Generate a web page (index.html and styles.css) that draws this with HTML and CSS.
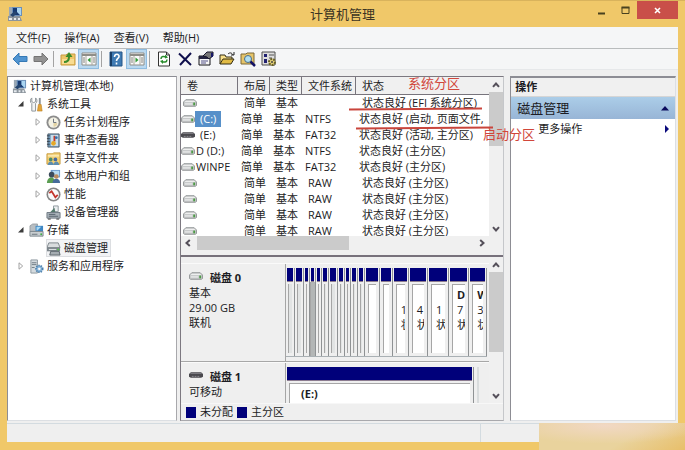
FILE: index.html
```html
<!DOCTYPE html>
<html lang="zh-CN">
<head>
<meta charset="utf-8">
<title>计算机管理</title>
<link rel="stylesheet" href="styles.css">
</head>
<body>
<svg class="sprites" aria-hidden="true">
  <symbol id="i-pc" viewBox="0 0 16 16"><path d="M2 1h5v9H2z" fill="#9aa8b4"/><path d="M5 1h10v9H5z" fill="#6b8fb8"/><path d="M6 2h8v7H6z" fill="#a9d5f2"/><path d="M6 2h4v4l3 3H6z" fill="#173b73"/><path d="M1 10h12l2 5H1z" fill="#8c959d"/><path d="M2 12h3v2H2zM7 12h2v2H7zM11 12h2v2h-2z" fill="#e5eaee"/><path d="M3 9l5-4 2 2-4 4z" fill="#26466f"/></symbol>
  <symbol id="i-tools" viewBox="0 0 16 16"><path d="M3 1v4l2 1 2-1V1c2 1 2 5 0 6v8H3V7C1 6 1 2 3 1z" fill="#f3f5f6" stroke="#8b9297"/><path d="M11.500 1v7" stroke="#8b9297" stroke-width="2"/><path d="M10 8h3l1 7H9z" fill="#e3a53a" stroke="#b97b1c" stroke-width=".6"/></symbol>
  <symbol id="i-clock" viewBox="0 0 16 16"><circle cx="8" cy="8" r="7.500" fill="#8c8c8c"/><circle cx="8" cy="8" r="5.500" fill="#f3f1e4"/><path d="M8 4v4h3" stroke="#68707c" fill="none"/><path d="M8 8.500h4a4 4 0 0 1-4 4z" fill="#e3d3a3"/></symbol>
  <symbol id="i-event" viewBox="0 0 16 16"><path d="M2 1h12v14H2z" fill="#6c96b7" stroke="#51606f"/><path d="M1 3h3M1 6h3M1 9h3M1 12h3" stroke="#36424d"/><path d="M5 2h8v12H5z" fill="#c9dfec"/><path d="M9 3v6" stroke="#c23a2d" stroke-width="2"/><circle cx="8" cy="11" r="2.500" fill="#e5a928"/><circle cx="11" cy="5" r="1.500" fill="#376dab"/></symbol>
  <symbol id="i-share" viewBox="0 0 16 16"><path d="M1 3h6l1-1h7v12H1z" fill="#f1ce72" stroke="#c79a3d"/><path d="M2 5h12" stroke="#fbe7ad" stroke-width="2"/><circle cx="5" cy="9" r="2" fill="#4c8a6a"/><circle cx="10" cy="9" r="2" fill="#496a9f"/><path d="M2 15c0-5 6-5 6 0zM8 15c0-5 6-5 6 0z" fill="#5d8db0"/></symbol>
  <symbol id="i-users" viewBox="0 0 16 16"><path d="M5 1h10v8H5z" fill="#6f9ccc"/><path d="M7 2h7v6H7z" fill="#b6daf1"/><circle cx="6" cy="6" r="3" fill="#3c4c5c"/><circle cx="11" cy="8" r="2.500" fill="#bc8c5e"/><path d="M1 15c0-8 9-8 9 0z" fill="#5b9d52"/><path d="M7 15c0-6 8-6 8 0z" fill="#466b9a"/></symbol>
  <symbol id="i-perf" viewBox="0 0 16 16"><circle cx="8" cy="8" r="7.500" fill="#858585"/><circle cx="8" cy="8" r="5.800" fill="#fafafa"/><path d="M3.500 6.500L6 4.500l4 6.500 2.500-2.500" stroke="#c3342b" fill="none" stroke-width="1.800"/></symbol>
  <symbol id="i-device" viewBox="0 0 16 16"><path d="M8 1h5v6H8z" fill="#eceff1" stroke="#8d979d"/><path d="M6 6l3-3 1 5H4z" fill="#53796b"/><path d="M1 8h14v6H1z" fill="#a9b2b9" stroke="#6f7a83"/><path d="M3 10h7M3 12h10" stroke="#54616b"/><path d="M2 15h3M11 15h3" stroke="#333"/></symbol>
  <symbol id="i-storage" viewBox="0 0 16 16"><path d="M1 3l3-2h5v8H1z" fill="#b8bec2" stroke="#808a90" stroke-width=".7"/><path d="M7 3h8v6H7z" fill="#3f87c4"/><path d="M8 4h5l-4 4H8z" fill="#a6d8f4"/><path d="M1 9h14v5H1z" fill="#c9ced1" stroke="#7a858c"/><path d="M3 12h6" stroke="#66727a"/><circle cx="13" cy="12" r="1" fill="#3fae43"/></symbol>
  <symbol id="i-disk" viewBox="0 0 16 16"><path d="M3 2h10l2 5H1z" fill="#d9dcde" stroke="#7c8489"/><path d="M1 7h14v4H1z" fill="#7d868c"/><path d="M3 9h8" stroke="#e6eaec"/><path d="M5 11h9l1 4H4z" fill="#a6adb2" stroke="#596269"/><circle cx="13" cy="9" r="1" fill="#59c64d"/></symbol>
  <symbol id="i-services" viewBox="0 0 16 16"><path d="M2 1h7v14H2z" fill="#d5dbdf" stroke="#8c979e"/><path d="M3 4h5M3 6h5M3 9h3" stroke="#6a7780"/><circle cx="11" cy="10.500" r="3.500" fill="#8cb9de" stroke="#4f81ac" stroke-dasharray="1.500 1" stroke-width="2"/><circle cx="11" cy="10.500" r="1.300" fill="#fff"/></symbol>
  <symbol id="i-vol" viewBox="0 0 15 8"><path d="M3 .5h9l2.500 2.500v3.500l-1 1h-12l-1-1V3z" fill="#c8cacb" stroke="#8f9293"/><path d="M3 1.500h9L13.500 3H1.500z" fill="#eeefef"/><path d="M2 5h8" stroke="#f6f6f6"/><path d="M11 3.500h2v3h-2z" fill="#4c9b45"/></symbol>
  <symbol id="i-usb" viewBox="0 0 15 8"><path d="M2 1h11l2 2v3l-2 1H2L0 6V3z" fill="#4a494e"/><path d="M2 2h11l1 1H1z" fill="#8b8a90"/><path d="M3 5.500h2M6 5.500h2M9 5.500h2" stroke="#8f8e94"/></symbol>
  <symbol id="i-open" viewBox="0 0 8 8"><path d="M6.500 1v5.500H1z" fill="#3c3c3c"/></symbol>
  <symbol id="i-closed" viewBox="0 0 8 8"><path d="M2 .8v6.400L5.700 4z" fill="#fff" stroke="#a2a2a2"/></symbol>
  <symbol id="i-chev" viewBox="0 0 10 10"><path d="M2 6.800L5 3.500l3 3.300" fill="none" stroke="#55505a" stroke-width="2"/></symbol>
  <symbol id="i-back" viewBox="0 0 16 16"><path d="M1 8l6-6v3.500h8v5H7V14z" fill="#4f94d1" stroke="#3579b5"/></symbol>
  <symbol id="i-fwd" viewBox="0 0 16 16"><path d="M15 8L9 2v3.500H1v5h8V14z" fill="#929292" stroke="#747474"/></symbol>
  <symbol id="i-up" viewBox="0 0 16 16"><path d="M1 4h5l1-1h8v11H1z" fill="#eec568" stroke="#c79b40"/><path d="M2 8h12v5H2z" fill="#f8dc92"/><path d="M4 11c4 0 5-3 5-5" stroke="#3b8c2b" stroke-width="2" fill="none"/><path d="M5.500 6L9 1l3.500 5z" fill="#3b8c2b"/></symbol>
  <symbol id="i-panel" viewBox="0 0 16 16"><path d="M1 2h14v12H1z" fill="#fafafa" stroke="#8f8e88"/><path d="M1 4h14" stroke="#8f8e88" stroke-width="2"/><path d="M5 5v9M11 5v9" stroke="#aaa79e"/><path d="M2 7h2M2 9h2M2 11h2M12 7h2M12 9h2M12 11h2" stroke="#85847f"/></symbol>
  <symbol id="i-help" viewBox="0 0 16 16"><path d="M2 1h12v14H2z" fill="#3f7bb4" stroke="#265687"/><path d="M3 1v14" stroke="#183d66" stroke-width="2"/><path d="M6.500 6c0-4 5-3 4.500-.5C11 7.500 8.500 7.500 8.500 10M8.500 11.500v2" stroke="#fff" stroke-width="1.600" fill="none"/></symbol>
  <symbol id="i-refresh" viewBox="0 0 16 16"><path d="M2.500 1h8l3 3v11h-11z" fill="#fff" stroke="#333"/><path d="M10.500 1v3h3" fill="none" stroke="#333"/><path d="M5 8c0-3 3-3 5-2M11 8.500c0 3-3 3-5 2" fill="none" stroke="#278c2c" stroke-width="1.500"/><path d="M9 3.500l3 3-3 1zM7 13l-3-3 3-1z" fill="#278c2c"/></symbol>
  <symbol id="i-x" viewBox="0 0 16 16"><path d="M2 2.500l12 11.500M14 2L3 14" stroke="#10104e" stroke-width="2" fill="none"/></symbol>
  <symbol id="i-prop" viewBox="0 0 16 16"><path d="M1 5h11v9H1z" fill="#f6f6f6" stroke="#15151b"/><path d="M1 5h11v3H1z" fill="#242442"/><path d="M3 10h7M3 12h5" stroke="#54548a"/><path d="M5 5l4-4h6v4l-4 3-2-2z" fill="#777" stroke="#16162d"/><path d="M13 2h2v4h-2z" fill="#181868"/></symbol>
  <symbol id="i-folder" viewBox="0 0 16 16"><path d="M1 13V4h5l1 2h6v2" fill="#f9e08a" stroke="#332d16"/><path d="M1 13l3-5h11l-3 5z" fill="#e1bb45" stroke="#332d16"/><path d="M9 3c2-2 4-1 5 1M12 4h3V1" fill="none" stroke="#222"/></symbol>
  <symbol id="i-search" viewBox="0 0 16 16"><path d="M1 3h5l1-1h7v11H1z" fill="#e6c469" stroke="#7b6839"/><circle cx="8" cy="8" r="3.500" fill="#b1dff1" stroke="#496d89"/><path d="M10.500 10.500L15 15" stroke="#131366" stroke-width="2.500"/></symbol>
  <symbol id="i-set" viewBox="0 0 16 16"><path d="M1 1h13v13H1z" fill="#dedede" stroke="#4f4f4f"/><path d="M3 3h3v3H3zM3 8h3v4H3z" fill="#202070"/><path d="M8 4h5M8 7h3" stroke="#555"/><circle cx="11" cy="11" r="3" fill="#e5d27a" stroke="#696025" stroke-width="2" stroke-dasharray="2 1"/><circle cx="11" cy="11" r="1" fill="#444"/></symbol>
</svg>

<div class="window">
  <header class="titlebar">
    <svg class="app-icon"><use href="#i-pc"/></svg>
    <h1>计算机管理</h1>
    <div class="win-buttons">
      <button class="win-btn" aria-label="最小化"><svg viewBox="0 0 9 9"><path d="M1 7.500h7" stroke="#49411f" stroke-width="2"/></svg></button>
      <button class="win-btn" aria-label="最大化"><svg viewBox="0 0 9 9"><path d="M1 1.500h7v6H1z" fill="none" stroke="#49411f"/><path d="M.5 1.500h8" stroke="#49411f" stroke-width="2"/></svg></button>
      <button class="win-btn close" aria-label="关闭"><svg viewBox="0 0 9 9"><path d="M2 2l5 5M7 2L2 7" stroke="#fff" stroke-width="1.600"/></svg></button>
    </div>
  </header>

  <div class="client">
    <nav class="menubar">
      <button>文件(F)</button><button>操作(A)</button><button>查看(V)</button><button>帮助(H)</button>
    </nav>
    <div class="toolbar">
      <button aria-label="后退"><svg><use href="#i-back"/></svg></button>
      <button aria-label="前进"><svg><use href="#i-fwd"/></svg></button>
      <span class="sep"></span>
      <button aria-label="上一级"><svg><use href="#i-up"/></svg></button>
      <button class="on" aria-label="显示控制台树"><svg viewBox="0 0 16 16"><use href="#i-panel"/><path d="M9.500 6.500v5L6.500 9z" fill="#2f9a35"/></svg></button>
      <span class="sep"></span>
      <button aria-label="帮助"><svg><use href="#i-help"/></svg></button>
      <button class="on" aria-label="显示操作窗格"><svg viewBox="0 0 16 16"><use href="#i-panel"/><path d="M6.500 6.500v5l3-2.500z" fill="#2f9a35"/></svg></button>
      <span class="sep"></span>
      <button aria-label="刷新"><svg><use href="#i-refresh"/></svg></button>
      <button aria-label="删除"><svg><use href="#i-x"/></svg></button>
      <button aria-label="属性"><svg><use href="#i-prop"/></svg></button>
      <button aria-label="打开"><svg><use href="#i-folder"/></svg></button>
      <button aria-label="搜索"><svg><use href="#i-search"/></svg></button>
      <button aria-label="设置"><svg><use href="#i-set"/></svg></button>
    </div>

    <main class="panes">
      <nav class="tree">
        <div class="node"><span class="label"><svg class="ico"><use href="#i-pc"/></svg>计算机管理(本地)</span></div>
        <ul>
          <li><div class="node"><svg class="twisty"><use href="#i-open"/></svg><span class="label"><svg class="ico"><use href="#i-tools"/></svg>系统工具</span></div>
            <ul>
              <li class="node"><svg class="twisty"><use href="#i-closed"/></svg><span class="label"><svg class="ico"><use href="#i-clock"/></svg>任务计划程序</span></li>
              <li class="node"><svg class="twisty"><use href="#i-closed"/></svg><span class="label"><svg class="ico"><use href="#i-event"/></svg>事件查看器</span></li>
              <li class="node"><svg class="twisty"><use href="#i-closed"/></svg><span class="label"><svg class="ico"><use href="#i-share"/></svg>共享文件夹</span></li>
              <li class="node"><svg class="twisty"><use href="#i-closed"/></svg><span class="label"><svg class="ico"><use href="#i-users"/></svg>本地用户和组</span></li>
              <li class="node"><svg class="twisty"><use href="#i-closed"/></svg><span class="label"><svg class="ico"><use href="#i-perf"/></svg>性能</span></li>
              <li class="node"><svg class="twisty"></svg><span class="label"><svg class="ico"><use href="#i-device"/></svg>设备管理器</span></li>
            </ul>
          </li>
          <li><div class="node"><svg class="twisty"><use href="#i-open"/></svg><span class="label"><svg class="ico"><use href="#i-storage"/></svg>存储</span></div>
            <ul>
              <li class="node"><svg class="twisty"></svg><span class="label current"><svg class="ico"><use href="#i-disk"/></svg>磁盘管理</span></li>
            </ul>
          </li>
          <li class="node"><svg class="twisty"><use href="#i-closed"/></svg><span class="label"><svg class="ico"><use href="#i-services"/></svg>服务和应用程序</span></li>
        </ul>
      </nav>

      <section class="center">
        <div class="volumes">
          <div class="list">
            <table>
              <colgroup><col class="c-vol"><col class="c-s"><col class="c-s"><col class="c-fs"><col></colgroup>
              <thead><tr><th>卷</th><th>布局</th><th>类型</th><th>文件系统</th><th>状态</th></tr></thead>
              <tbody>
                <tr class="unnamed"><td><svg class="vol"><use href="#i-vol"/></svg></td><td>简单</td><td>基本</td><td></td><td>状态良好 (EFI 系统分区)</td></tr>
                <tr><td><svg class="vol"><use href="#i-vol"/></svg><span class="letter picked">(C:)</span></td><td>简单</td><td>基本</td><td>NTFS</td><td>状态良好 (启动, 页面文件,</td></tr>
                <tr><td><svg class="vol"><use href="#i-usb"/></svg><span class="letter">(E:)</span></td><td>简单</td><td>基本</td><td>FAT32</td><td>状态良好 (活动, 主分区)</td></tr>
                <tr><td><svg class="vol"><use href="#i-vol"/></svg><span class="name">D (D:)</span></td><td>简单</td><td>基本</td><td>NTFS</td><td>状态良好 (主分区)</td></tr>
                <tr><td><svg class="vol"><use href="#i-vol"/></svg><span class="name">WINPE</span></td><td>简单</td><td>基本</td><td>FAT32</td><td>状态良好 (主分区)</td></tr>
                <tr class="unnamed"><td><svg class="vol"><use href="#i-vol"/></svg></td><td>简单</td><td>基本</td><td>RAW</td><td>状态良好 (主分区)</td></tr>
                <tr class="unnamed"><td><svg class="vol"><use href="#i-vol"/></svg></td><td>简单</td><td>基本</td><td>RAW</td><td>状态良好 (主分区)</td></tr>
                <tr class="unnamed"><td><svg class="vol"><use href="#i-vol"/></svg></td><td>简单</td><td>基本</td><td>RAW</td><td>状态良好 (主分区)</td></tr>
                <tr class="unnamed"><td><svg class="vol"><use href="#i-vol"/></svg></td><td>简单</td><td>基本</td><td>RAW</td><td>状态良好 (主分区)</td></tr>
              </tbody>
            </table>
          </div>
          <div class="vscroll"><svg><use href="#i-chev"/></svg><div class="track"><div class="thumb"></div></div><svg class="down"><use href="#i-chev"/></svg></div>
          <div class="hscroll"><svg class="left"><use href="#i-chev"/></svg><div class="track"><div class="thumb"></div></div><svg class="right"><use href="#i-chev"/></svg></div>
          <span class="mark line-one"></span><span class="mark line-two"></span>
          <span class="note note-one">系统分区</span><span class="note note-two">启动分区</span>
        </div>

        <div class="disks">
          <div class="disk-view">
            <div class="disk-rows">
              <div class="disk">
                <div class="disk-info"><h2><svg class="vol"><use href="#i-vol"/></svg>磁盘 0</h2><p>基本</p><p>29.00 GB</p><p>联机</p></div>
                <div class="map">
                  <div class="part thin"><i></i><div></div></div>
                  <div class="part thin"><i></i><div></div></div>
                  <div class="part thin"><i></i><div></div></div>
                  <div class="part thin dim"><i></i><div></div></div>
                  <div class="part thin"><i></i><div></div></div>
                  <div class="part thin"><i></i><div></div></div>
                  <div class="part thin"><i></i><div></div></div>
                  <div class="part thin"><i></i><div></div></div>
                  <div class="part thin"><i></i><div></div></div>
                  <div class="part thin"><i></i><div></div></div>
                  <div class="part thin"><i></i><div></div></div>
                  <div class="part"><i></i><div></div></div>
                  <div class="part"><i></i><div></div></div>
                  <div class="part"><i></i><div><b></b><span>1</span><span>状</span></div></div>
                  <div class="part"><i></i><div><b></b><span>4</span><span>状</span></div></div>
                  <div class="part"><i></i><div><b></b><span>1</span><span>状</span></div></div>
                  <div class="part"><i></i><div><b>D</b><span>7</span><span>状</span></div></div>
                  <div class="part"><i></i><div><b>W</b><span>3</span><span>状</span></div></div>
                </div>
              </div>
              <div class="disk second">
                <div class="disk-info"><h2><svg class="vol"><use href="#i-usb"/></svg>磁盘 1</h2><p>可移动</p><p>14.60 GB</p></div>
                <div class="map single"><div class="part wide"><i></i><div><b>(E:)</b></div></div></div>
              </div>
            </div>
            <div class="vscroll"><svg><use href="#i-chev"/></svg><div class="track"><div class="thumb low"></div></div><svg class="down"><use href="#i-chev"/></svg></div>
          </div>
          <div class="legend"><i></i>未分配<i></i>主分区</div>
        </div>
      </section>

      <aside class="actions">
        <h2>操作</h2>
        <button class="group">磁盘管理<svg viewBox="0 0 8 8"><path d="M0 6.500h8L4 2z" fill="#0a0a5c"/></svg></button>
        <button class="more">更多操作<svg viewBox="0 0 8 8"><path d="M3 0v8l4-4z" fill="#0a0a7c"/></svg></button>
      </aside>
    </main>
    <footer class="status"><span></span></footer>
  </div>
  <div class="haze"></div>
</div>
</body>
</html>
```
FILE: styles.css
```css
* { box-sizing: border-box; }

body {
  margin: 0;
  font: 11px/16px "Open Sans", "Noto Sans CJK SC", sans-serif;
  color: #1c1c24;
}

h1, h2, p, ul { margin: 0; padding: 0; font-size: 11px; font-weight: normal; }
ul, li { list-style: none; }
svg { display: block; flex: none; }
button { border: 0; padding: 0; background: none; font: inherit; color: inherit; }
.sprites { position: absolute; width: 0; height: 0; }

.window {
  position: relative;
  display: flex;
  flex-direction: column;
  height: 100vh;
  padding: 0 7px 8px;
  background: #f0c869;
  border-top: 1px solid #d9b35c;
  overflow: hidden;
}

/* Title bar */
.titlebar {
  flex: none;
  display: grid;
  grid-template-columns: 1fr auto 1fr;
  height: 26px;
}
.app-icon { width: 16px; height: 16px; margin: 5px 0 0; }
.titlebar h1 { font-size: 13px; line-height: 26px; color: #3c3423; }
.win-buttons { display: flex; justify-content: flex-end; align-items: flex-start; }
.win-btn { display: grid; place-items: center; width: 24px; height: 18px; }
.win-btn svg { width: 9px; height: 9px; }
.win-btn.close { width: 41px; background: #c94f49; }

.client {
  flex: 1;
  min-height: 0;
  display: flex;
  flex-direction: column;
  background: #efefef;
}

.menubar {
  flex: none;
  display: flex;
  gap: 14px;
  height: 22px;
  padding: 0 9px;
  background: #f5f6f7;
  border-bottom: 1px solid #b9bcbd;
}

.toolbar {
  flex: none;
  display: flex;
  align-items: center;
  height: 21px;
  padding-left: 2px;
  background: #f5f6f7;
  border-bottom: 1px solid #e6e8ea;
}
.toolbar button { display: grid; place-items: center; width: 21px; height: 20px; }
.toolbar button svg { width: 16px; height: 16px; }
.toolbar button.on { background: #b9d8f0; border: 1px solid #8fbce0; }
.toolbar .sep { width: 1px; height: 16px; margin: 0 3px 0 2px; background: #a3a3a3; }

/* Panes */
.panes {
  flex: 1;
  min-height: 0;
  display: grid;
  grid-template-columns: 170px minmax(0, 323fr) minmax(0, 168fr);
  column-gap: 3px;
  padding: 6px 2px 2px 0;
}
.tree, .actions { background: #fff; border: 1px solid #8d8d94; border-right-color: #a8a8ac; border-bottom-color: #dcdfe3; }
.actions { margin-left: 3px; border-top-width: 2px; border-right-color: #dcdfe3; }

.tree { padding: 0 0 0 4px; overflow: hidden; }
.tree ul { padding-left: 2px; }
.tree ul ul { padding-left: 17px; }
.node { display: flex; align-items: center; height: 18px; }
.twisty { width: 8px; height: 8px; margin: 0 4px 0 3px; }
.label { display: flex; align-items: center; gap: 3px; height: 18px; white-space: nowrap; }
.label.current { padding-right: 3px; background: #f2f3f5; outline: 1px solid #dcdee1; outline-offset: -1px; }
.ico { width: 15px; height: 15px; }

/* Volume list */
.center { display: flex; flex-direction: column; min-width: 0; min-height: 0; border: 1px solid #7c7880; border-right-color: #c5c7ca; border-bottom-color: #a9a9ad; }
.volumes {
  position: relative;
  flex: 178;
  min-height: 0;
  display: grid;
  grid-template-columns: minmax(0, 1fr) 14px;
  grid-template-rows: minmax(0, 1fr) 14px;
  padding-bottom: 5px;
  background: #f0f0f0;
  border-bottom: 2px solid #77717b;
}
.list { overflow: hidden; background: #fff; }
.list table { width: 100%; table-layout: fixed; border-collapse: separate; border-spacing: 0; }
.c-vol { width: 57px; }
.c-s { width: 32px; }
.c-fs { width: 54px; }
.list th {
  height: 18px;
  padding: 0 0 0 6px;
  text-align: left;
  font-weight: normal;
  background: #f0f0f0;
  border-right: 1px solid #77747c;
  border-bottom: 1px solid #77747c;
  white-space: nowrap;
}
.list th:last-child { border-right: 0; }
.list td { height: 16px; padding: 0 0 0 3px; line-height: 16px; white-space: nowrap; overflow: hidden; }
.list .unnamed td { padding-left: 6px; }
.list td:first-child { padding-left: 0; }
.list .unnamed td:first-child { padding-left: 2px; }
.list td:first-child > * { display: inline-block; vertical-align: top; }
.list td .vol { margin: 4px 0; }
.vol { width: 14px; height: 8px; }
.name { padding-left: 1px; }
.letter { padding: 0 5px; }
.picked { background: #5790c9; color: #fff; }

.vscroll { display: flex; flex-direction: column; align-items: center; width: 14px; padding: 3px 0 2px; background: #f0f0f0; }
.vscroll svg, .hscroll svg { width: 10px; height: 10px; }
.vscroll .down { transform: rotate(180deg); }
.vscroll .track { flex: 1; width: 100%; padding-top: 2px; }
.thumb { background: #cbcbcb; height: 41%; }
.thumb.low { height: 67%; }
.hscroll { display: flex; align-items: center; padding: 0 2px; background: #f0f0f0; }
.hscroll .left { transform: rotate(-90deg); }
.hscroll .right { transform: rotate(90deg); }
.hscroll .track { flex: 1; height: 100%; padding: 0 4px; }
.hscroll .thumb { width: 55%; height: 100%; }

/* Annotations drawn over the list */
.mark { position: absolute; height: 2px; background: #c9453c; }
.line-one { left: 168px; top: 31px; width: 133px; transform: rotate(-.5deg); }
.line-two { left: 175px; top: 50px; width: 137px; transform: rotate(-.5deg); }
.note { position: absolute; font-size: 13px; color: #d1463b; white-space: nowrap; z-index: 2; }
.note-one { left: 227px; top: -2px; }
.note-two { left: 302px; top: 49px; }

/* Disk map */
.disks { flex: 167; min-height: 0; display: flex; flex-direction: column; }
.disk-view { flex: 1; min-height: 0; display: flex; }
.disk-rows { flex: 1; min-width: 0; overflow: hidden; padding-top: 6px; }
.disk { display: grid; grid-template-columns: 105px minmax(0, 1fr); height: 99px; border-top: 1px solid #fafafa; border-bottom: 1px solid #a7a7a7; }
.disk-info { padding: 5px 0 0 8px; border-right: 1px solid #a5a5a5; line-height: 15px; }
.disk-info h2 { display: flex; gap: 7px; height: 16px; font-weight: bold; line-height: 18px; }
.disk-info .vol { margin-top: 3px; }
.map {
  display: grid;
  grid-template-columns:
    minmax(0, 9fr) minmax(0, 9fr) minmax(0, 6fr) minmax(0, 6fr) minmax(0, 6fr) minmax(0, 7fr)
    minmax(0, 9fr) minmax(0, 7fr) minmax(0, 6fr) minmax(0, 7fr) minmax(0, 6fr) minmax(0, 15fr)
    minmax(0, 13fr) minmax(0, 16fr) minmax(0, 19fr) minmax(0, 21fr) minmax(0, 20fr) minmax(0, 18fr);
  margin: 4px 2px 4px 0;
  border-bottom: 1px solid #a9b0b4;
}
.part { display: flex; flex-direction: column; min-width: 0; border-right: 1px solid #8f9294; }
.part > i { flex: none; height: 14px; margin-right: 1px; margin-left: 1px; background: #00007a; border-bottom: 1px solid #8c7c90; }
.part > div {
  flex: 1;
  min-height: 0;
  display: flex;
  flex-direction: column;
  margin: 2px 3px 3px;
  padding: 2px 0 0 4px;
  border: 1px solid #a6a6a6;
  border-right: 0;
  border-bottom: 0;
  background: #fff;
  line-height: 15px;
  overflow: hidden;
}
.part b, .part span { display: block; flex: none; height: 15px; }
.part.thin > div { margin: 2px 2px 3px; padding: 0; border-width: 0 0 0 1px; background: #e2e4e4; }
.part.dim > div { margin: 0; background: #b3b6b6; }
.second { border-bottom: 0; }
.map.single { grid-template-columns: minmax(0, 1fr); margin: 4px 10px 4px 0; border-right: 2px solid #d9dcdd; padding-right: 3px; }
.part.wide > div { padding: 2px 0 0 11px; }

.legend { flex: none; display: flex; align-items: center; gap: 4px; height: 17px; padding-left: 5px; border-top: 1px solid #f7f7f7; }
.legend i { width: 10px; height: 11px; background: #00007a; }

/* Actions */
.actions h2 { height: 19px; padding-left: 4px; font-weight: bold; line-height: 18px; background: #f0f0f0; border-bottom: 1px solid #d5d5d5; }
.actions button { display: flex; align-items: center; justify-content: space-between; width: 100%; }
.actions svg { width: 8px; height: 8px; }
.actions .group { height: 22px; padding: 0 6px; font-size: 13px; background: linear-gradient(#abcde8, #98b5d6); }
.actions .more { height: 20px; padding: 0 5px 0 27px; }

.status { flex: none; height: 19px; border-top: 1px solid #d3dbe0; display: flex; }
.status span { width: 474px; border-right: 1px solid #d3dbe0; }

/* Warm glow in the lower right corner */
.haze {
  position: absolute;
  right: 0;
  bottom: 0;
  width: 146px;
  height: 27px;
  background:
    radial-gradient(ellipse 100px 18px at 45% 10%, #f1d8c4, transparent),
    linear-gradient(150deg, #e9d39d 60%, #e8bf6a);
}
```
